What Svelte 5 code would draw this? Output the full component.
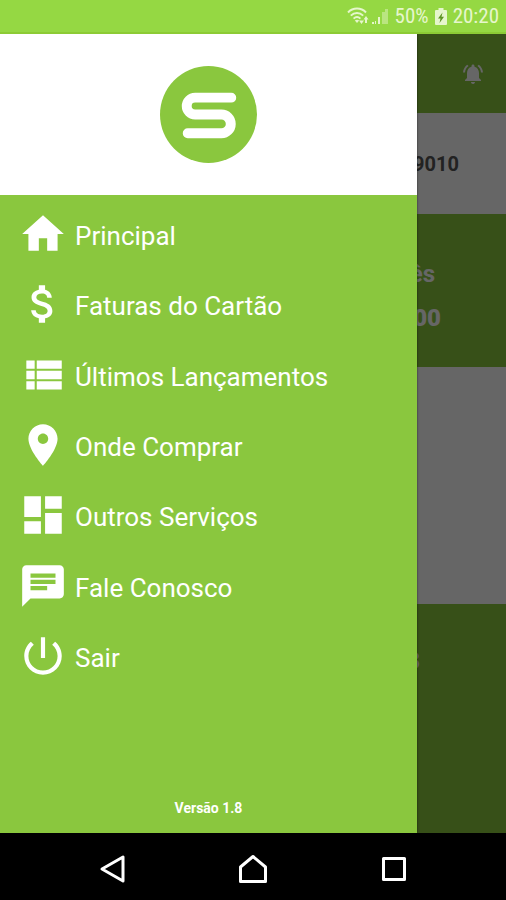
<script>
  let selected = $state("principal");

  const items = [
    {
      id: "principal",
      label: "Principal",
      icon: "M10 20v-6h4v6h5v-8h3L12 3 2 12h3v8z",
    },
    {
      id: "faturas",
      label: "Faturas do Cartão",
      icon: "M11.8 10.9c-2.27-.59-3-1.2-3-2.15 0-1.09 1.01-1.85 2.7-1.85 1.78 0 2.44.85 2.5 2.1h2.21c-.07-1.72-1.12-3.3-3.21-3.81V3h-3v2.16c-1.94.42-3.5 1.68-3.5 3.61 0 2.31 1.91 3.46 4.7 4.13 2.5.6 3 1.48 3 2.41 0 .69-.49 1.79-2.7 1.79-2.06 0-2.87-.92-2.98-2.1h-2.2c.12 2.19 1.76 3.42 3.68 3.83V21h3v-2.15c1.95-.37 3.5-1.5 3.5-3.55 0-2.84-2.43-3.81-4.7-4.4z",
    },
    {
      id: "lancamentos",
      label: "Últimos Lançamentos",
      icon: "M4 14h4v-4H4v4zm0 5h4v-4H4v4zM4 9h4V5H4v4zm5 5h12v-4H9v4zm0 5h12v-4H9v4zM9 5v4h12V5H9z",
    },
    {
      id: "onde",
      label: "Onde Comprar",
      icon: "M12 2C8.13 2 5 5.13 5 9c0 5.25 7 13 7 13s7-7.75 7-13c0-3.87-3.13-7-7-7zm0 9.5c-1.38 0-2.5-1.12-2.5-2.5s1.12-2.5 2.5-2.5 2.5 1.12 2.5 2.5-1.12 2.5-2.5 2.5z",
    },
    {
      id: "servicos",
      label: "Outros Serviços",
      icon: "M3 13h8V3H3v10zm0 8h8v-6H3v6zm10 0h8V11h-8v10zm0-18v6h8V3h-8z",
    },
    {
      id: "fale",
      label: "Fale Conosco",
      icon: "M20 2H4c-1.1 0-1.99.9-1.99 2L2 22l4-4h14c1.1 0 2-.9 2-2V4c0-1.1-.9-2-2-2zM6 9h12v2H6V9zm8 5H6v-2h8v2zm4-6H6V6h12v2z",
    },
    {
      id: "sair",
      label: "Sair",
      icon: "M13 3h-2v10h2V3zm4.83 2.17l-1.42 1.42C17.99 7.86 19 9.81 19 12c0 3.87-3.13 7-7 7s-7-3.13-7-7c0-2.19 1.01-4.14 2.58-5.42L6.17 5.17C4.23 6.82 3 9.26 3 12c0 4.97 4.03 9 9 9s9-4.03 9-9c0-2.74-1.23-5.18-3.17-6.83z",
    },
  ];
</script>

<div class="phone">
  <div class="status">
    <svg class="wifi" viewBox="0 0 22 18">
      <g fill="none" stroke="currentColor" stroke-width="2">
        <path d="M1 5.500C6 .3 14 .3 19 5.500" />
        <path d="M3.800 8.600C7.500 5 12.500 5 16.200 8.600" />
        <path d="M6.600 11.600C8.700 9.600 11.300 9.600 13.400 11.600" />
      </g>
      <path d="M10 16l-2.200-2.400q2.200-1.800 4.400 0z" fill="currentColor" />
      <path d="M14.500 17l-2.500-3.500h5zM19 9l2.500 3.500h-1.500V16h-2v-3.500h-1.500z" fill="currentColor" />
    </svg>
    <svg class="signal" viewBox="0 0 17 16">
      <path d="M0 14h2v2H0zM3 13h1v3H3zM6 9h2v7H6z" fill="currentColor" />
      <path d="M10 4h3v12h-3zM13 1h3v15h-3z" fill="currentColor" opacity="0.45" />
    </svg>
    <span>50%</span>
    <svg class="battery" viewBox="0 0 12 17">
      <path d="M3.500 0h5v2H11q1 0 1 1v13q0 1-1 1H1q-1 0-1-1V3q0-1 1-1h2.500z" fill="currentColor" />
      <path d="M7.500 4.500L3 10.500h2.500L4.500 15 9 8.800H6.500z" fill="#5d9422" />
    </svg>
    <span>20:20</span>
  </div>

  <div class="body">
    <main class="page">
      <header class="bar">
        <svg class="bell" viewBox="0 0 24 24">
          <path
            fill="currentColor"
            d="M7.580 4.080L6.150 2.650C3.750 4.480 2.170 7.300 2.030 10.500h2c.15-2.650 1.510-4.970 3.550-6.420zm12.390 6.420h2c-.15-3.200-1.730-6.020-4.120-7.850l-1.420 1.430c2.020 1.450 3.390 3.770 3.540 6.420zM18 11c0-3.070-1.640-5.640-4.500-6.320V4c0-.83-.67-1.500-1.500-1.500s-1.500.67-1.500 1.500v.68C7.630 5.360 6 7.920 6 11v5l-2 2v1h16v-1l-2-2v-5zm-6 11c.14 0 .27-.01.400-.04.650-.14 1.180-.58 1.440-1.180.100-.24.150-.50.150-.78h-4c.010 1.100.900 2 2.010 2z"
          />
        </svg>
      </header>
      <div class="card-number">9010</div>
      <section class="month">
        <span>Mês</span>
        <strong>0,00</strong>
      </section>
      <div class="blank"></div>
      <section class="extra">8</section>
    </main>

    <button class="scrim" aria-label="Fechar menu"></button>

    <aside class="drawer">
      <div class="brand">
        <svg class="logo" viewBox="0 0 98 98">
          <circle cx="49" cy="49" r="49" fill="#8ac73e" />
          <path
            d="M72 32H35.500a8.500 8.500 0 0 0 0 17H62a9.500 9.500 0 0 1 0 19H28"
            fill="none"
            stroke="#fff"
            stroke-width="10"
            stroke-linecap="round"
          />
        </svg>
      </div>
      <nav class="menu">
        {#each items as item (item.id)}
          <button
            class="item"
            aria-current={selected === item.id ? "page" : undefined}
            onclick={() => (selected = item.id)}
          >
            <svg viewBox="0 0 24 24"><path d={item.icon} fill="currentColor" /></svg>
            {item.label}
          </button>
        {/each}
      </nav>
      <footer class="version">Versão 1.8</footer>
    </aside>
  </div>

  <div class="softkeys">
    <button aria-label="Voltar">
      <svg viewBox="0 0 30 30"><path d="M26 3v24L5 15z" /></svg>
    </button>
    <button aria-label="Início">
      <svg viewBox="0 0 30 30"><path d="M15 2.500L27.500 13v14.500h-25V13z" /></svg>
    </button>
    <button aria-label="Recentes">
      <svg viewBox="0 0 30 30"><path d="M4.500 4.500h21v21h-21z" /></svg>
    </button>
  </div>
</div>

<style>
  :global(body) {
    margin: 0;
  }
  .phone {
    display: flex;
    flex-direction: column;
    min-height: 100vh;
    font-family: Roboto, "Liberation Sans", sans-serif;
    background: #000;
  }
  button {
    padding: 0;
    border: 0;
    background: none;
    font: inherit;
    color: inherit;
    cursor: pointer;
  }
  svg {
    display: block;
    flex: none;
  }

  .status {
    display: flex;
    align-items: center;
    justify-content: flex-end;
    gap: 6px;
    height: 34px;
    box-sizing: border-box;
    padding: 0 7px;
    border-bottom: 2px solid #8ccb35;
    background: #95d843;
    color: #e6f6cc;
    font-family: "Roboto Condensed", Roboto, sans-serif;
    font-size: 21px;
  }
  .wifi {
    width: 22px;
    height: 18px;
    margin-right: -3px;
  }
  .signal {
    width: 17px;
    height: 16px;
  }
  .battery {
    width: 12px;
    height: 17px;
  }

  .body {
    position: relative;
    display: flex;
    flex: 1;
    overflow: hidden;
  }
  .page {
    display: flex;
    flex-direction: column;
    flex: 1;
    background: #fff;
  }
  .bar {
    display: flex;
    align-items: center;
    justify-content: flex-end;
    height: 79px;
    padding-right: 21px;
    background: #8ac73e;
    color: #fff;
  }
  .bell {
    width: 24px;
    height: 24px;
  }
  .card-number {
    display: flex;
    align-items: center;
    justify-content: flex-end;
    height: 101px;
    padding-right: 47px;
    color: #555;
    font-size: 20px;
    font-weight: 700;
  }
  .month {
    display: flex;
    flex-direction: column;
    align-items: flex-end;
    justify-content: center;
    gap: 12px;
    height: 153px;
    box-sizing: border-box;
    padding: 10px 65px 0 0;
    background: #8ac73e;
    color: #fff;
    font-size: 24px;
    font-weight: 700;
    line-height: 32px;
  }
  .month span {
    padding-right: 6px;
  }
  .blank {
    height: 237px;
  }
  .extra {
    flex: 1;
    padding: 41px 86px 0 0;
    background: #8ac73e;
    color: #fff;
    font-size: 24px;
    font-weight: 700;
    line-height: 32px;
    text-align: right;
  }
  .scrim {
    position: absolute;
    inset: 0;
    background: rgba(0, 0, 0, 0.6);
  }

  .drawer {
    position: absolute;
    top: 0;
    bottom: 0;
    left: 0;
    display: flex;
    flex-direction: column;
    width: 82.4%;
    background: #8ac73e;
    color: #fff;
    box-shadow: 0 0 2px rgba(0, 0, 0, 0.6);
  }
  .brand {
    display: flex;
    align-items: center;
    justify-content: center;
    height: 161px;
    background: #fff;
  }
  .logo {
    width: 97px;
    height: 97px;
  }
  .menu {
    display: flex;
    flex-direction: column;
    flex: 1;
    padding-top: 6px;
  }
  .item {
    display: flex;
    flex: 1;
    align-items: center;
    gap: 7px;
    padding-left: 18px;
    font-size: 26px;
    text-align: left;
  }
  .item svg {
    width: 50px;
    height: 50px;
    margin-bottom: 4px;
  }
  .version {
    display: flex;
    align-items: flex-end;
    justify-content: center;
    height: 140px;
    padding-bottom: 16px;
    box-sizing: border-box;
    font-size: 14px;
    font-weight: 700;
    line-height: 18px;
  }

  .softkeys {
    display: flex;
    align-items: center;
    justify-content: center;
    gap: 111px;
    height: 67px;
    padding-top: 5px;
    box-sizing: border-box;
    background: #000;
  }
  .softkeys svg {
    width: 30px;
    height: 30px;
    fill: none;
    stroke: #fff;
    stroke-width: 3;
    stroke-linejoin: round;
  }
</style>
